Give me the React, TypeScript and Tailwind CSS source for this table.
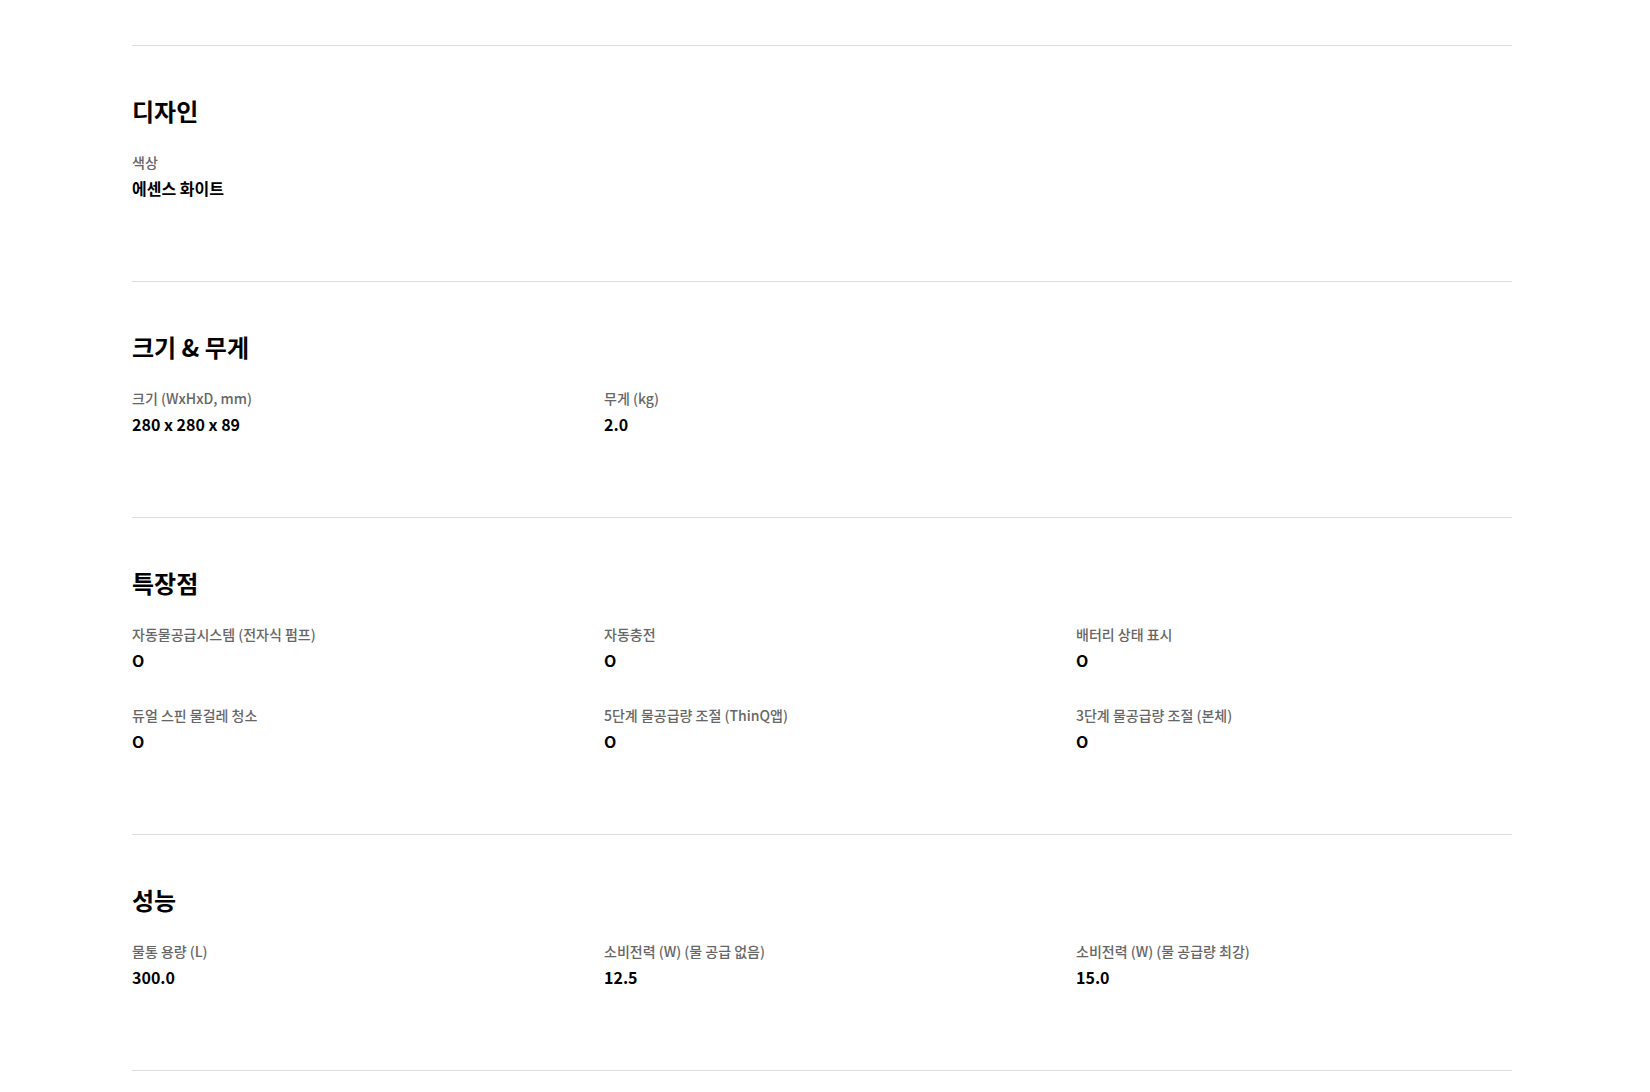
type Spec = { label: string; value: string }

type Section = { title: string; specs: Spec[] }

const sections: Section[] = [
  { title: '디자인', specs: [{ label: '색상', value: '에센스 화이트' }] },
  {
    title: '크기 & 무게',
    specs: [
      { label: '크기 (WxHxD, mm)', value: '280 x 280 x 89' },
      { label: '무게 (kg)', value: '2.0' },
    ],
  },
  {
    title: '특장점',
    specs: [
      { label: '자동물공급시스템 (전자식 펌프)', value: 'O' },
      { label: '자동충전', value: 'O' },
      { label: '배터리 상태 표시', value: 'O' },
      { label: '듀얼 스핀 물걸레 청소', value: 'O' },
      { label: '5단계 물공급량 조절 (ThinQ앱)', value: 'O' },
      { label: '3단계 물공급량 조절 (본체)', value: 'O' },
    ],
  },
  {
    title: '성능',
    specs: [
      { label: '물통 용량 (L)', value: '300.0' },
      { label: '소비전력 (W) (물 공급 없음)', value: '12.5' },
      { label: '소비전력 (W) (물 공급량 최강)', value: '15.0' },
    ],
  },
]

export default function App() {
  return (
    <main className="min-h-screen bg-white pt-[45px] font-['Noto_Sans_CJK_KR','Noto_Sans',sans-serif] text-black">
      <div className="ml-[132px] w-[1380px] border-b border-[#dddddd]">
        {sections.map((section) => (
          <section key={section.title} className="border-t border-[#dddddd] pb-[81px] pt-[49px]">
            <h2 className="text-[24px] font-bold leading-[32px]">{section.title}</h2>
            <div className="mt-[25px] grid grid-cols-3 gap-x-9 gap-y-[33px]">
              {section.specs.map((spec) => (
                <div key={spec.label}>
                  <p className="text-[14px] font-medium leading-[20px] text-[#666666]">{spec.label}</p>
                  <p className="mt-[4px] text-[16px] font-bold leading-[24px]">{spec.value}</p>
                </div>
              ))}
            </div>
          </section>
        ))}
      </div>
    </main>
  )
}
